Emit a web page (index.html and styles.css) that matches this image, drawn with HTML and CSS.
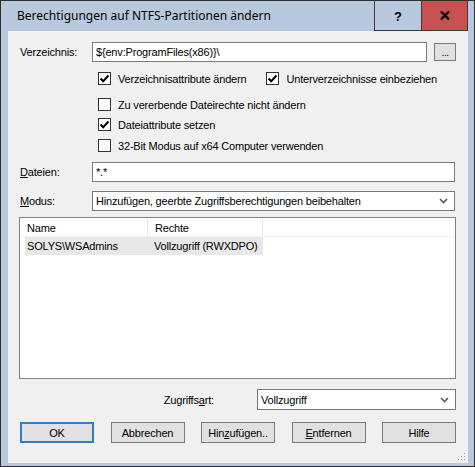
FILE: index.html
```html
<!DOCTYPE html>
<html lang="de">
<head>
<meta charset="utf-8">
<title>Berechtigungen auf NTFS-Partitionen ändern</title>
<link rel="stylesheet" href="styles.css">
</head>
<body>
<div class="window">
  <div class="titlebar">
    <div class="title">Berechtigungen auf NTFS-Partitionen ändern</div>
    <div class="tb-btn help">?</div>
    <div class="tb-btn close">
      <svg width="10" height="9" viewBox="0 0 10 9"><path d="M1 0.5 L9 8.5 M9 0.5 L1 8.5" stroke="#000" stroke-width="2.2"/></svg>
    </div>
  </div>
  <div class="content">
    <div class="row dir-row">
      <span class="lbl">Verzeichnis:</span>
      <div class="field dir">${env:ProgramFiles(x86)}\</div>
      <div class="browse">...</div>
    </div>

    <div class="check-row c1">
      <span class="check"><span class="cb on"><svg width="11" height="11" viewBox="0 0 11 11"><path d="M1.5 5.5 L4.2 8.2 L9.5 2.5" fill="none" stroke="#000" stroke-width="2"/></svg></span>Verzeichnisattribute ändern</span>
      <span class="check second"><span class="cb on"><svg width="11" height="11" viewBox="0 0 11 11"><path d="M1.5 5.5 L4.2 8.2 L9.5 2.5" fill="none" stroke="#000" stroke-width="2"/></svg></span>Unterverzeichnisse einbeziehen</span>
    </div>
    <div class="check-row c2">
      <span class="check"><span class="cb"></span>Zu vererbende Dateirechte nicht ändern</span>
    </div>
    <div class="check-row c3">
      <span class="check"><span class="cb on"><svg width="11" height="11" viewBox="0 0 11 11"><path d="M1.5 5.5 L4.2 8.2 L9.5 2.5" fill="none" stroke="#000" stroke-width="2"/></svg></span>Dateiattribute setzen</span>
    </div>
    <div class="check-row c4">
      <span class="check"><span class="cb"></span>32-Bit Modus auf x64 Computer verwenden</span>
    </div>

    <div class="row files-row">
      <span class="lbl"><u>D</u>ateien:</span>
      <div class="field wide">*.*</div>
    </div>
    <div class="row mode-row">
      <span class="lbl"><u>M</u>odus:</span>
      <div class="field wide select">
        <span>Hinzufügen, geerbte Zugriffsberechtigungen beibehalten</span>
        <svg class="chev" width="9" height="6" viewBox="0 0 9 6"><path d="M1 1 L4.5 4.5 L8 1" fill="none" stroke="#5a5a5a" stroke-width="1.6"/></svg>
      </div>
    </div>

    <div class="list">
      <div class="list-head">
        <span class="col c-name">Name</span>
        <span class="col c-rights">Rechte</span>
      </div>
      <div class="list-row">
        <span class="col c-name">SOLYS\WSAdmins</span>
        <span class="col c-rights">Vollzugriff (RWXDPO)</span>
      </div>
    </div>

    <div class="row access-row">
      <span class="access-lbl">Zugriffs<u>a</u>rt:</span>
      <div class="field select access">
        <span>Vollzugriff</span>
        <svg class="chev" width="9" height="6" viewBox="0 0 9 6"><path d="M1 1 L4.5 4.5 L8 1" fill="none" stroke="#5a5a5a" stroke-width="1.6"/></svg>
      </div>
    </div>

    <div class="buttons">
      <div class="btn default">OK</div>
      <div class="btn">Abbrechen</div>
      <div class="btn">Hin<u>z</u>ufügen..</div>
      <div class="btn"><u>E</u>ntfernen</div>
      <div class="btn">Hilfe</div>
    </div>

    <svg class="grip" width="8" height="8" viewBox="0 0 8 8">
      <rect x="6" y="0" width="1" height="1" fill="#a0a0a0"/>
      <rect x="3" y="3" width="1" height="1" fill="#a0a0a0"/>
      <rect x="6" y="3" width="1" height="1" fill="#a0a0a0"/>
      <rect x="0" y="6" width="1" height="1" fill="#a0a0a0"/>
      <rect x="3" y="6" width="1" height="1" fill="#a0a0a0"/>
      <rect x="6" y="6" width="1" height="1" fill="#a0a0a0"/>
    </svg>
  </div>
</div>
</body>
</html>
```

FILE: styles.css
```css
* { box-sizing: border-box; }

html, body {
  margin: 0;
  padding: 0;
  background: #b8c9de;
}

.window {
  width: 475px;
  height: 467px;
  border: 1px solid #2e2e2e;
  background: #b8c9de;
  display: flex;
  flex-direction: column;
  font-family: "Liberation Sans", Arial, sans-serif;
  font-size: 11px;
  color: #000;
}

/* caption bar */
.titlebar {
  height: 30px;
  display: flex;
  padding-right: 6px;
  flex: none;
}
.title {
  flex: 1;
  padding-left: 16px;
  line-height: 29px;
  font-family: "Noto Sans", "Open Sans", sans-serif;
  font-size: 12px;
  color: #000;
  white-space: nowrap;
}
.tb-btn {
  width: 47px;
  height: 30px;
  border-left: 1px solid #3a3a3a;
  border-bottom: 1px solid #3a3a3a;
  display: flex;
  align-items: center;
  justify-content: center;
}
.help {
  font-family: "Liberation Sans", Arial, sans-serif;
  font-weight: bold;
  font-size: 13px;
  padding-top: 1px;
}
.close {
  width: 47px;
  background: #c75050;
  border-right: 1px solid #3a3a3a;
}

/* client area */
.content {
  position: relative;
  margin: 0 6px 0 7px;
  height: 432px;
  background: #f0f0f0;
  padding: 11px 12px 0 12px;
  display: flex;
  flex-direction: column;
  letter-spacing: -0.18px;
}

.row {
  display: flex;
  align-items: center;
  flex: none;
}
.lbl {
  width: 72px;
  flex: none;
}

.field {
  height: 20px;
  background: #fff;
  border: 1px solid #7a7a7a;
  padding: 0 3px;
  display: flex;
  align-items: center;
  white-space: nowrap;
}
.dir { width: 336px; }
.wide { width: 363px; }
.browse {
  margin-left: 7px;
  width: 22px;
  height: 18px;
  background: #e1e1e1;
  border: 1px solid #7a7a7a;
  display: flex;
  align-items: flex-end;
  justify-content: center;
  padding-bottom: 2px;
  font-size: 10px;
  line-height: 10px;
  letter-spacing: -0.5px;
}

.select {
  justify-content: space-between;
  padding-right: 6px;
}
.chev { flex: none; }

/* check boxes */
.check-row {
  display: flex;
  height: 13px;
  align-items: center;
  padding-left: 78px;
  flex: none;
}
.c1 { margin-top: 10px; }
.c2 { margin-top: 13px; }
.c3 { margin-top: 7px; }
.c4 { margin-top: 8px; }

.check {
  display: flex;
  align-items: center;
  white-space: nowrap;
}
.check.second { margin-left: 20px; }
.cb {
  width: 13px;
  height: 13px;
  border: 1px solid #333;
  background: #fff;
  margin-right: 7px;
  display: flex;
  align-items: center;
  justify-content: center;
  flex: none;
}

.files-row { margin-top: 10px; }
.mode-row { margin-top: 9px; }

/* list view */
.list {
  margin-top: 6px;
  margin-left: -1px;
  width: 437px;
  height: 162px;
  background: #fff;
  border: 1px solid #828282;
  padding: 1px;
  flex: none;
}
.list-head, .list-row {
  display: flex;
  height: 18px;
  align-items: center;
}
.list-head {
  border-bottom: 1px solid #f0f0f0;
}
.list-head .col {
  border-right: 1px solid #e5e5e5;
  height: 100%;
  display: flex;
  align-items: center;
}
.col { padding-left: 6px; flex: none; }
.c-name { width: 127px; }
.c-rights { width: 115px; }
.list-head .c-rights { padding-left: 7px; }
.list-row {
  margin-left: 4px;
  width: 238px;
  background: #e8e8e8;
}
.list-row .col { padding-left: 2px; }
.list-row .c-name { width: 127px; }

.access-row {
  margin-top: 10px;
  justify-content: flex-end;
}
.access-lbl { margin-right: 43px; }
.access {
  width: 199px;
  height: 21px;
}

/* command buttons */
.buttons {
  margin-top: 12px;
  display: flex;
  justify-content: space-between;
  flex: none;
}
.btn {
  width: 74px;
  height: 21px;
  background: #e1e1e1;
  border: 1px solid #7a7a7a;
  display: flex;
  align-items: center;
  justify-content: center;
  white-space: nowrap;
}
.btn.default {
  border: 1px solid #2f7fc7;
  box-shadow: inset 0 0 0 1px #2f7fc7;
}

.grip {
  position: absolute;
  right: 2px;
  bottom: 2px;
}
```
